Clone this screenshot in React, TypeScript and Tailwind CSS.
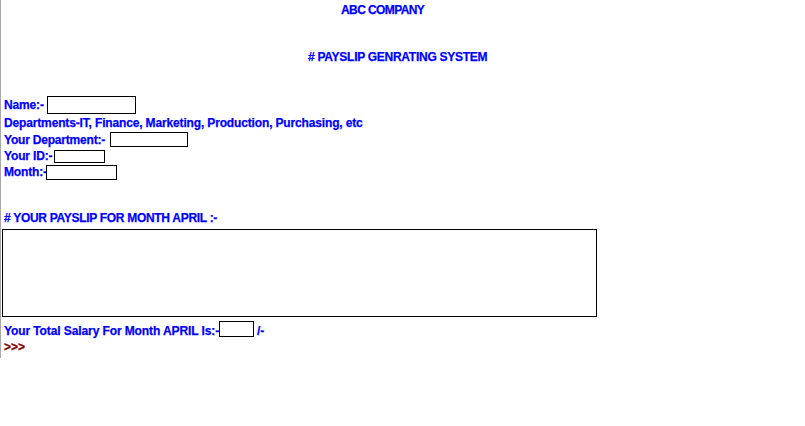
export default function App() {
  return (
    <div className="w-[805px] h-[426px] bg-white font-['Liberation_Sans',Arial,sans-serif] font-bold text-[12px] leading-[14px] text-[#0000ff] [-webkit-text-stroke:0.25px_currentColor]">
      <div className="h-[358px] border-l border-[#a8a8a8] pl-[3px] pt-[3px] flex flex-col">
        {/* Headings */}
        <div className="pl-[337px] whitespace-nowrap tracking-[-0.6px]">ABC COMPANY</div>
        <div className="mt-[33px] pl-[304px] whitespace-nowrap tracking-[-0.27px]"># PAYSLIP GENRATING SYSTEM</div>

        {/* Form */}
        <div className="mt-[32px] h-[18px] flex items-center tracking-[-0.15px]">
          <span className="w-[43px] whitespace-nowrap">Name:-</span>
          <input className="w-[89px] h-[18px] border border-black" />
        </div>
        <div className="mt-[2px] whitespace-nowrap tracking-[-0.15px]">
          Departments-IT, Finance, Marketing, Production, Purchasing, etc
        </div>
        <div className="mt-[2px] h-[15px] flex items-center tracking-[-0.2px]">
          <span className="w-[106px] whitespace-nowrap">Your Department:-</span>
          <input className="w-[78px] h-[15px] border border-black" />
        </div>
        <div className="mt-[1px] h-[16px] flex items-center tracking-[-0.15px]">
          <span className="w-[50px] whitespace-nowrap">Your ID:-</span>
          <input className="w-[51px] h-[13px] border border-black" />
        </div>
        <div className="h-[16px] flex items-center tracking-[-0.15px]">
          <span className="w-[42px] whitespace-nowrap">Month:-</span>
          <input className="w-[71px] h-[15px] border border-black" />
        </div>

        {/* Payslip output */}
        <div className="mt-[31px] whitespace-nowrap tracking-[-0.3px]"># YOUR PAYSLIP FOR MONTH APRIL :-</div>
        <div className="mt-[4px] -ml-[2px] w-[595px] h-[88px] border border-black bg-white" />

        <div className="mt-[4px] h-[16px] flex items-start tracking-[-0.1px]">
          <span className="mt-[3px] w-[215px] whitespace-nowrap">Your Total Salary For Month APRIL Is:-</span>
          <input className="w-[35px] h-[16px] border border-black" />
          <span className="mt-[3px] ml-[3px]">/-</span>
        </div>
        <div className="mt-[3px] text-[#800000]">&gt;&gt;&gt;</div>
      </div>
    </div>
  )
}
